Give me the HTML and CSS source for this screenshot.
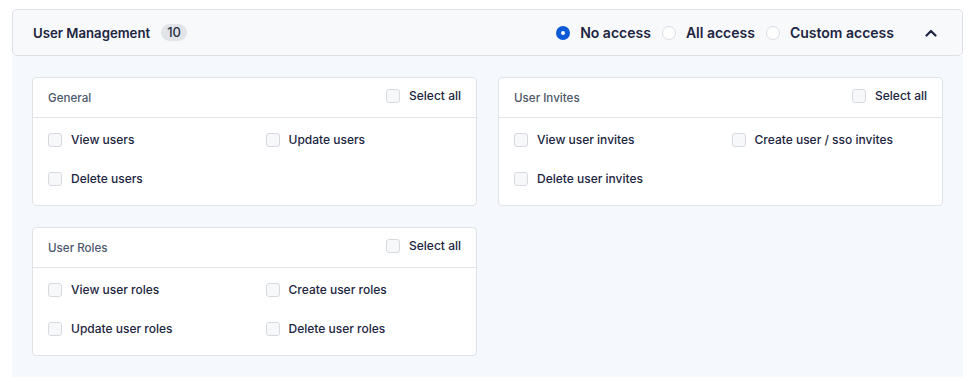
FILE: index.html
```html
<!DOCTYPE html>
<html lang="en">
<head>
    <meta charset="UTF-8">
    <meta name="viewport" content="width=device-width, initial-scale=1.0">
    <title>Permissions</title>
    <link rel="stylesheet" href="styles.css">
</head>
<body>
    <div class="section">
        <div class="section-header">
            <div class="section-title">
                <span>User Management</span>
                <span class="count">10</span>
            </div>
            <div class="access">
                <label class="radio"><span class="dot checked"></span>No access</label>
                <label class="radio"><span class="dot"></span>All access</label>
                <label class="radio"><span class="dot"></span>Custom access</label>
                <svg class="chevron" width="12" height="8" viewBox="0 0 12 8">
                    <path d="M1.5 6.5 L6 2 L10.5 6.5" fill="none" stroke="#1c2541" stroke-width="2.2" stroke-linecap="round" stroke-linejoin="round"/>
                </svg>
            </div>
        </div>
        <div class="section-body">
            <div class="card">
                <div class="card-header">
                    <span class="card-title">General</span>
                    <label class="check select-all"><span class="box"></span>Select all</label>
                </div>
                <div class="card-items">
                    <label class="check"><span class="box"></span>View users</label>
                    <label class="check"><span class="box"></span>Update users</label>
                    <label class="check"><span class="box"></span>Delete users</label>
                </div>
            </div>
            <div class="card">
                <div class="card-header">
                    <span class="card-title">User Invites</span>
                    <label class="check select-all"><span class="box"></span>Select all</label>
                </div>
                <div class="card-items">
                    <label class="check"><span class="box"></span>View user invites</label>
                    <label class="check"><span class="box"></span>Create user / sso invites</label>
                    <label class="check"><span class="box"></span>Delete user invites</label>
                </div>
            </div>
            <div class="card">
                <div class="card-header">
                    <span class="card-title">User Roles</span>
                    <label class="check select-all"><span class="box"></span>Select all</label>
                </div>
                <div class="card-items">
                    <label class="check"><span class="box"></span>View user roles</label>
                    <label class="check"><span class="box"></span>Create user roles</label>
                    <label class="check"><span class="box"></span>Update user roles</label>
                    <label class="check"><span class="box"></span>Delete user roles</label>
                </div>
            </div>
        </div>
    </div>
</body>
</html>
```

FILE: styles.css
```css
body {
    margin: 0;
    background-color: #fff;
    font-family: Inter, "Noto Sans", sans-serif;
    color: #1c2541;
}
.section {
    width: 951px;
    margin: 9px 0 0 12px;
}
.section-header {
    height: 45px;
    display: flex;
    align-items: center;
    justify-content: space-between;
    padding: 0 25px 0 20px;
    background-color: #f8f9fb;
    border: 1px solid #dde1e7;
    border-radius: 5px;
}
.section-title {
    display: flex;
    align-items: center;
    gap: 11px;
    font-size: 13.2px;
    font-weight: 600;
    color: #1c2541;
}
.count {
    background-color: #e1e4e9;
    border-radius: 9px;
    padding: 0 6px;
    height: 17px;
    line-height: 17px;
    font-size: 13px;
    font-weight: 500;
    color: #2a3246;
}
.access {
    display: flex;
    align-items: center;
    gap: 11px;
}
.radio {
    display: flex;
    align-items: center;
    gap: 10px;
    font-size: 14px;
    font-weight: 600;
    color: #1c2541;
}
.dot {
    width: 12px;
    height: 12px;
    border: 1px solid #dadde2;
    border-radius: 50%;
    background-color: #fff;
}
.dot.checked {
    width: 4px;
    height: 4px;
    border: 5px solid #0c5ad6;
    background-color: #fff;
}
.chevron {
    margin-left: 20px;
}
.section-body {
    display: grid;
    grid-template-columns: 1fr 1fr;
    align-items: start;
    gap: 21px 21px;
    padding: 21px 20px 21px 20px;
    background-color: #f5f8fd;
}
.card {
    background-color: #fff;
    border: 1px solid #dfe2e7;
    border-radius: 4px;
}
.card-header {
    height: 39px;
    display: flex;
    align-items: center;
    justify-content: space-between;
    padding: 0 15px;
    border-bottom: 1px solid #e1e4e8;
}
.card-title {
    font-size: 11.6px;
    font-weight: 500;
    color: #4c576b;
}
.select-all {
    margin-bottom: 3px;
}
.check {
    display: flex;
    align-items: center;
    gap: 9px;
    font-size: 12px;
    font-weight: 500;
    line-height: 20px;
    color: #1c2541;
}
.box {
    width: 12px;
    height: 12px;
    border: 1px solid #d6dae0;
    border-radius: 3px;
    background-color: #f7f8fa;
}
.card-items {
    display: grid;
    grid-template-columns: 1fr 1fr;
    gap: 19px 22px;
    padding: 12px 15px 16px 15px;
}
```
